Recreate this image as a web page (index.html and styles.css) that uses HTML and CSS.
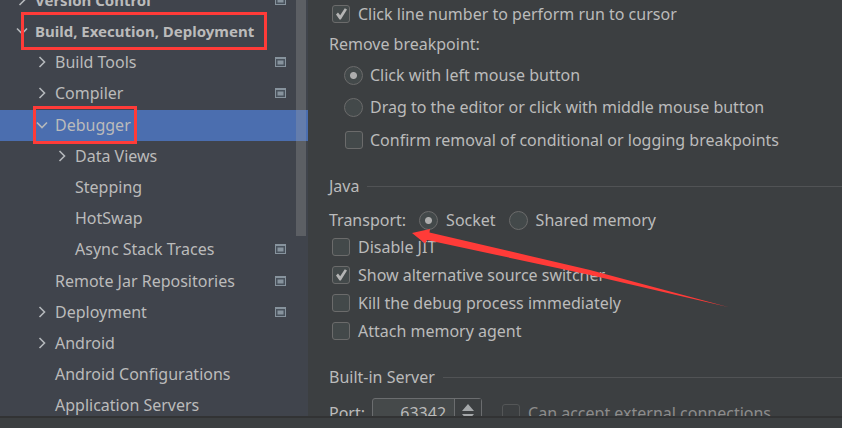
FILE: index.html
```html
<!DOCTYPE html>
<html lang="en">
<head>
<meta charset="utf-8">
<title>Settings</title>
<link rel="stylesheet" href="styles.css">
</head>
<body>
<svg class="defs" aria-hidden="true">
  <symbol id="right" viewBox="0 0 12 12"><path d="M3.500 1L8.500 6L3.500 11" fill="none" stroke="#b4b8bb" stroke-width="1.600"/></symbol>
  <symbol id="down" viewBox="0 0 12 12"><path d="M1 3.500L6 8.500L11 3.500" fill="none" stroke="#b4b8bb" stroke-width="1.600"/></symbol>
  <symbol id="scope" viewBox="0 0 11 10"><path d="M0 0H11V10H0Z" fill="#87939d"/><path d="M1 2H10V9H1Z" fill="#49525c"/><path d="M2.500 3.500H8.500V7.500H2.500Z" fill="#87939d"/></symbol>
</svg>
<div class="window">
  <nav class="sidebar" aria-label="Settings">
    <ul class="tree">
      <li><a class="row bold" href="#vcs"><svg class="chevron"><use href="#right"/></svg>Version Control<svg class="scope"><use href="#scope"/></svg></a></li>
      <li><a class="row bold" href="#build"><svg class="chevron"><use href="#down"/></svg><span class="marked wide">Build, Execution, Deployment</span></a>
        <ul class="level">
          <li><a class="row" href="#tools"><svg class="chevron"><use href="#right"/></svg>Build Tools<svg class="scope"><use href="#scope"/></svg></a></li>
          <li><a class="row" href="#compiler"><svg class="chevron"><use href="#right"/></svg>Compiler<svg class="scope"><use href="#scope"/></svg></a></li>
          <li class="open"><a class="row selected" href="#debugger"><svg class="chevron"><use href="#down"/></svg><span class="marked">Debugger</span></a>
            <ul class="level deep">
              <li><a class="row" href="#views"><svg class="chevron"><use href="#right"/></svg>Data Views</a></li>
              <li><a class="row leaf" href="#stepping">Stepping</a></li>
              <li><a class="row leaf" href="#hotswap">HotSwap</a></li>
              <li><a class="row leaf" href="#async">Async Stack Traces<svg class="scope"><use href="#scope"/></svg></a></li>
            </ul>
          </li>
          <li><a class="row leaf" href="#jars">Remote Jar Repositories<svg class="scope"><use href="#scope"/></svg></a></li>
          <li><a class="row" href="#deployment"><svg class="chevron"><use href="#right"/></svg>Deployment<svg class="scope"><use href="#scope"/></svg></a></li>
          <li><a class="row" href="#android"><svg class="chevron"><use href="#right"/></svg>Android</a></li>
          <li><a class="row leaf" href="#androidconf">Android Configurations</a></li>
          <li><a class="row leaf" href="#servers">Application Servers</a></li>
        </ul>
      </li>
    </ul>
    <div class="scrollbar"></div>
  </nav>
  <main class="content">
    <label class="option"><input type="checkbox" checked>Click line number to perform run to cursor</label>
    <fieldset class="group">
      <legend>Remove breakpoint:</legend>
      <label class="option"><input type="radio" name="remove" checked>Click with left mouse button</label>
      <label class="option"><input type="radio" name="remove">Drag to the editor or click with middle mouse button</label>
      <label class="option confirm"><input type="checkbox">Confirm removal of conditional or logging breakpoints</label>
    </fieldset>
    <section>
      <h2>Java</h2>
      <div class="transport" role="radiogroup" aria-labelledby="transport">
        <span id="transport">Transport:</span>
        <label class="option"><input type="radio" name="transport" checked>Socket</label>
        <label class="option"><input type="radio" name="transport">Shared memory</label>
      </div>
      <div class="checks">
        <label class="option"><input type="checkbox">Disable JIT</label>
        <label class="option"><input type="checkbox" checked>Show alternative source switcher</label>
        <label class="option"><input type="checkbox">Kill the debug process immediately</label>
        <label class="option"><input type="checkbox">Attach memory agent</label>
      </div>
    </section>
    <section>
      <h2>Built-in Server</h2>
      <div class="server">
        <label for="port">Port:</label>
        <div class="spinner">
          <input id="port" type="text" value="63342">
          <button type="button" aria-label="Change port"><svg viewBox="0 0 12 18"><path d="M0 7L6 0L12 7ZM0 10H12L6 17Z" fill="#a5a8aa"/></svg></button>
        </div>
        <label class="option disabled"><input type="checkbox" disabled>Can accept external connections</label>
      </div>
    </section>
  </main>
  <svg class="arrow" viewBox="0 0 316 75" aria-hidden="true"><path d="M0 1L18 -3L17.500 0.500L178 38L316 75L178 43L15 8L13 11.500Z" fill="#ff3b38"/></svg>
</div>
<footer class="footer"></footer>
</body>
</html>
```
FILE: styles.css
```css
* { box-sizing: border-box; }
body {
  margin: 0;
  height: 100vh;
  display: flex;
  flex-direction: column;
  overflow: hidden;
  background: #3c3f41;
  color: #bbbbbb;
  font: 16px/22px "Noto Sans", sans-serif;
}
.defs { position: absolute; width: 0; height: 0; }
.window { position: relative; flex: 1; min-height: 0; display: flex; overflow: hidden; }
.footer { flex: none; height: 12px; border-top: 2px solid #323334; }

.sidebar { position: relative; flex: none; width: 308px; overflow: hidden; background: #40444c; }
ul { list-style: none; margin: 0; padding: 0; }
.tree { margin-top: -15px; }
.row {
  display: flex;
  align-items: center;
  height: 31px;
  padding: 0 22px 2px 16px;
  color: inherit;
  text-decoration: none;
  white-space: nowrap;
}
.bold { font-weight: bold; font-size: 15px; }
.level .row { padding-left: 36px; }
.level .row.leaf { padding-left: 55px; }
.deep .row { padding-left: 56px; }
.deep .row.leaf { padding-left: 75px; }
.chevron { flex: none; width: 12px; height: 12px; margin-right: 7px; }
.scope { flex: none; width: 11px; height: 10px; margin-left: auto; }
.open { margin: 1px 0; }
.selected { background: #4b6eaf; }
.marked { position: relative; }
.marked::after {
  content: "";
  position: absolute;
  inset: -8px -6px -8px -22px;
  border: 3px solid #ff3b38;
}
.marked.wide::after { inset: -8px -13px -8px -14px; }
.scrollbar { position: absolute; top: 0; right: 2px; width: 10px; height: 236px; background: rgba(166, 166, 166, 0.28); }

.content { flex: 1; min-width: 0; padding: 3px 0 0 21px; white-space: nowrap; }
.option { display: flex; align-items: center; gap: 8px; }
.content > .option { padding-left: 3px; }
.group { margin: 8px 0 0; padding: 0 0 0 15px; border: 0; display: grid; gap: 10px; }
.group .option { gap: 7px; }
.group legend { margin: 0 0 9px -15px; padding: 0; }
.confirm { padding: 1px 0 0 1px; }
input[type="checkbox"], input[type="radio"] {
  appearance: none;
  flex: none;
  margin: 0;
  width: 18px;
  height: 18px;
  border: 1px solid #6b6b6b;
  border-radius: 3px;
  background: #43494a;
}
input[type="radio"] { width: 19px; height: 19px; border-radius: 50%; }
input[type="radio"]:checked { background: radial-gradient(circle, #adadad 3px, #43494a 4px); }
input[type="checkbox"]:checked { position: relative; }
input[type="checkbox"]:checked::after {
  content: "";
  position: absolute;
  left: 3px;
  top: 2px;
  width: 11px;
  height: 12px;
  background: #b4b4b4;
  clip-path: polygon(0 54%, 18% 38%, 38% 60%, 80% 2%, 100% 12%, 44% 96%, 32% 96%);
}
section { margin-top: 24px; }
h2 { display: flex; align-items: center; gap: 8px; margin: 0; font: inherit; }
h2::after { content: ""; flex: 1; height: 1px; background: #515355; }
.transport { display: flex; gap: 13px; margin-top: 12px; }
.checks { display: grid; gap: 6px; margin-top: 5px; padding-left: 3px; }
.server { display: flex; align-items: center; margin-top: 10px; }
.spinner { display: flex; width: 110px; height: 30px; margin: 0 20px 0 7px; border: 1px solid #6b6d6f; border-radius: 3px; background: #45494a; }
.spinner input { flex: 1; min-width: 0; padding: 0 8px 0 0; border: 0; background: none; color: inherit; font: inherit; text-align: right; }
.spinner button { flex: none; width: 27px; padding: 0; border: 0; border-left: 1px solid #6b6d6f; background: #3c3f41; display: grid; place-items: center; }
.spinner svg { width: 12px; height: 18px; }
.disabled { color: #8c8c8c; }
.disabled input[type="checkbox"] { border-color: #545657; background: #3c3f41; }
.arrow { position: absolute; left: 412px; top: 232px; width: 316px; height: 75px; overflow: visible; pointer-events: none; }
```
